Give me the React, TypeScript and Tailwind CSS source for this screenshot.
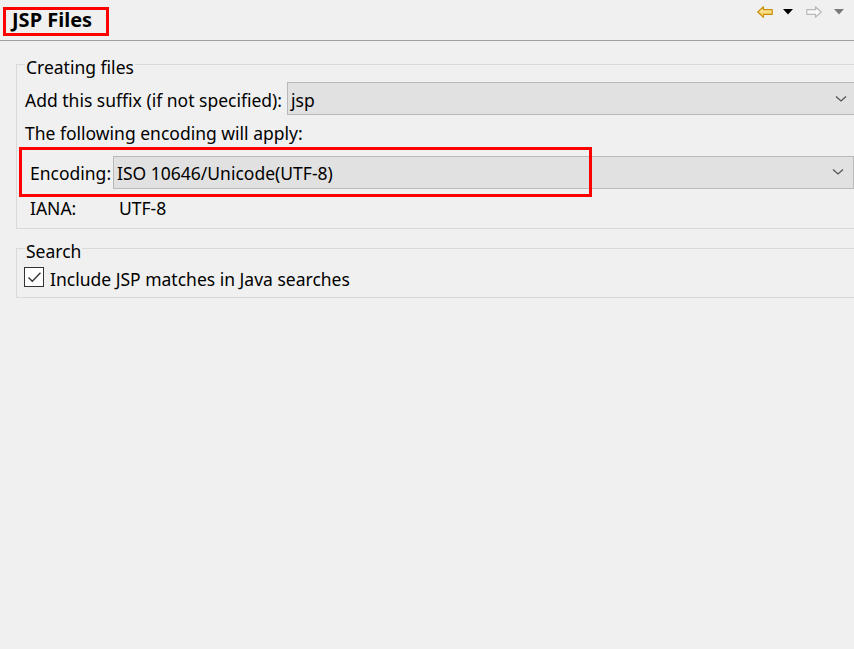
import React from "react";

function LeftArrow() {
  return (
    <svg width="16" height="12" viewBox="0 0 16 12">
      <defs>
        <linearGradient id="ga" x1="0" y1="0" x2="0" y2="1">
          <stop offset="0" stopColor="#fff6c8" />
          <stop offset="1" stopColor="#f5c842" />
        </linearGradient>
      </defs>
      <path d="M0.8 6 L6.5 0.8 L6.5 3.6 L15.2 3.6 L15.2 8.4 L6.5 8.4 L6.5 11.2 Z" fill="url(#ga)" stroke="#c8900c" strokeWidth="1.2" strokeLinejoin="round" />
    </svg>
  );
}

function RightArrow() {
  return (
    <svg width="16" height="12" viewBox="0 0 16 12">
      <path d="M15.2 6 L9.5 0.8 L9.5 3.6 L0.8 3.6 L0.8 8.4 L9.5 8.4 L9.5 11.2 Z" fill="#f8f8f8" stroke="#b8b8b8" strokeWidth="1.2" strokeLinejoin="round" />
    </svg>
  );
}

function Tri({ color }: { color: string }) {
  return (
    <svg width="10" height="6" viewBox="0 0 10 6">
      <path d="M0 0 L10 0 L5 5.5 Z" fill={color} />
    </svg>
  );
}

function Chevron() {
  return (
    <svg width="12" height="8" viewBox="0 0 12 8">
      <path d="M1 1.5 L6 6 L11 1.5" fill="none" stroke="#505050" strokeWidth="1.2" />
    </svg>
  );
}

function Combo({ value, extra }: { value: string; extra: string }) {
  return (
    <div className={`flex-1 h-[33px] bg-[#e1e1e1] border border-[#b9b9b9] flex items-center justify-between pl-[3px] pr-[9px] ${extra}`}>
      <span className="pt-[3px]">{value}</span>
      <Chevron />
    </div>
  );
}

export default function App() {
  return (
    <div
      className="w-[854px] h-[649px] bg-[#f0f0f0] overflow-hidden text-[17.5px] text-black relative"
      style={{ fontFamily: "'Noto Sans', 'Open Sans', sans-serif" }}
    >
      {/* header */}
      <div className="h-[41px] border-b border-[#a0a0a0] relative flex items-start">
        <div className="pl-[12px] pt-[6px] font-bold text-[20px] leading-[27px]">JSP Files</div>
        <div className="absolute left-[3px] top-[7px] w-[106px] h-[29px] border-[3px] border-[#ff0000]" />
        <div className="ml-auto mr-[10px] mt-[6px] flex items-center">
          <LeftArrow />
          <div className="ml-[10px]"><Tri color="#000000" /></div>
          <div className="ml-[13px]"><RightArrow /></div>
          <div className="ml-[12px]"><Tri color="#7a7a7a" /></div>
        </div>
      </div>

      <div className="pl-[16px] mr-[-4px]">
        {/* Creating files */}
        <fieldset className="mt-[9px] border border-[#d9d9d9] pb-[9px]">
          <legend className="ml-[8px] px-[1px] pt-[6px] leading-[22px]">Creating files</legend>
          <div className="flex items-center mt-[4px] pl-[8px]">
            <span className="w-[262px] shrink-0 pt-[4px]">Add this suffix (if not specified):</span>
            <Combo value="jsp" extra="" />
          </div>
          <div className="pl-[8px] mt-[7px] leading-[22px]">The following encoding will apply:</div>
          <div className="relative mt-[3px] h-[50px] flex items-center pl-[13px]">
            <span className="w-[83px] shrink-0 pt-[3px]">Encoding:</span>
            <Combo value="ISO 10646/Unicode(UTF-8)" extra="mr-[3px]" />
            <div className="absolute left-[2px] top-0 w-[573px] h-[50px] border-[3px] border-[#ff0000]" />
          </div>
          <div className="flex pl-[13px] leading-[22px]">
            <span className="w-[89px]">IANA:</span>
            <span>UTF-8</span>
          </div>
        </fieldset>

        {/* Search */}
        <fieldset className="mt-[5px] border border-[#d9d9d9] pb-[9px]">
          <legend className="ml-[8px] px-[1px] pt-[6px] leading-[22px]">Search</legend>
          <div className="flex items-center mt-[4px] pl-[7px] h-[22px]">
            <div className="w-[20px] h-[20px] border border-[#333333] bg-white flex items-center justify-center mr-[6px] shrink-0">
              <svg width="15" height="13" viewBox="0 0 15 13">
                <path d="M1.5 6.5 L5.3 10.3 L13.5 1.8" fill="none" stroke="#333333" strokeWidth="1.4" />
              </svg>
            </div>
            <span className="pt-[4px]">Include JSP matches in Java searches</span>
          </div>
        </fieldset>
      </div>
    </div>
  );
}
